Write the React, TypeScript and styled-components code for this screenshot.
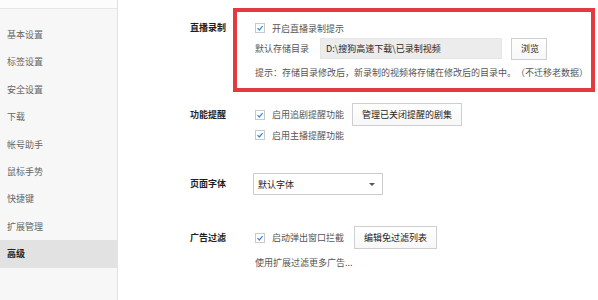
import React from "react";
import styled, { createGlobalStyle } from "styled-components";

const GlobalStyle = createGlobalStyle`
  html, body {
    margin: 0;
    padding: 0;
    background: #ffffff;
  }
  body {
    font-family: "Noto Sans CJK SC", "Noto Sans", sans-serif;
    font-size: 9px;
    color: #444;
    text-spacing-trim: space-all;
  }
`;

const Page = styled.div`
  display: flex;
  width: 598px;
  height: 300px;
  overflow: hidden;
  background: #ffffff;
`;

const Sidebar = styled.nav`
  display: flex;
  flex-direction: column;
  width: 117px;
  flex-shrink: 0;
  background: #f7f7f7;
  border-right: 1px solid #e2e2e2;
`;

const SidebarTop = styled.div`
  height: 8px;
  background: #fcfcfc;
  border-bottom: 1px solid #e6e6e6;
`;

const NavList = styled.ul`
  list-style: none;
  margin: 0;
  padding: 12px 0 0;
`;

const NavItem = styled.li<{ $active?: boolean }>`
  height: 27.4px;
  line-height: 27.4px;
  padding-left: 7px;
  font-size: 9px;
  color: ${({ $active }) => ($active ? "#222" : "#666")};
  font-weight: ${({ $active }) => ($active ? 600 : 400)};
  background: ${({ $active }) => ($active ? "#e2e2e2" : "transparent")};
`;

const Main = styled.main`
  display: flex;
  flex-direction: column;
  padding: 8px 0 0 72px;
  flex: 1;
`;

const Section = styled.section<{ $gap?: number }>`
  display: grid;
  grid-template-columns: 43px 1fr;
  align-items: start;
  margin-top: ${({ $gap }) => $gap ?? 0}px;
`;

const Label = styled.div<{ $top?: number; $lh: number }>`
  padding-top: ${({ $top }) => $top ?? 0}px;
  line-height: ${({ $lh }) => $lh}px;
  font-size: 9px;
  font-weight: 700;
  color: #1e1e1e;
  white-space: nowrap;
`;

const Content = styled.div`
  display: flex;
  flex-direction: column;
  padding-left: 22px;
`;

const Highlight = styled.div`
  display: flex;
  flex-direction: column;
  width: 362px;
  border: 4px solid #e23a3f;
  padding: 8px 0 8px 18px;
  box-sizing: border-box;
`;

const Row = styled.div<{ $h: number; $mt?: number }>`
  display: flex;
  align-items: center;
  height: ${({ $h }) => $h}px;
  margin-top: ${({ $mt }) => $mt ?? 0}px;
  white-space: nowrap;
`;

const Box = styled.span`
  display: inline-flex;
  width: 10px;
  height: 10px;
  box-sizing: border-box;
  border: 1px solid #c9c9c9;
  background: #fff;
  margin-right: 7px;
  flex-shrink: 0;
`;

const Text = styled.span<{ $color?: string }>`
  font-size: 9px;
  color: ${({ $color }) => $color ?? "#555"};
`;

const PathField = styled.div`
  width: 182px;
  height: 21px;
  box-sizing: border-box;
  margin-left: 11px;
  padding-left: 5px;
  display: flex;
  align-items: center;
  background: #ececec;
  border: 1px solid #e6e6e6;
  color: #2a2a2a;
  font-size: 9px;
`;

const Button = styled.button<{ $ml?: number; $w?: number; $h?: number }>`
  font-family: inherit;
  font-size: 9px;
  color: #222;
  height: ${({ $h }) => $h ?? 23}px;
  width: ${({ $w }) => ($w ? `${$w}px` : "auto")};
  padding: 0 9px;
  margin-left: ${({ $ml }) => $ml ?? 0}px;
  background: linear-gradient(#ffffff, #f7f7f7);
  border: 1px solid #cfcfcf;
  border-radius: 0;
  box-sizing: border-box;
  white-space: nowrap;
`;

const Select = styled.div`
  display: flex;
  align-items: center;
  justify-content: space-between;
  width: 130px;
  height: 22px;
  box-sizing: border-box;
  margin-left: -2px;
  padding: 0 7px 0 4px;
  background: #fff;
  border: 1px solid #cdcdcd;
  color: #222;
  font-size: 9px;
`;

const Arrow = styled.span`
  width: 0;
  height: 0;
  border-left: 3px solid transparent;
  border-right: 3px solid transparent;
  border-top: 3px solid #555;
`;

const Check: React.FC = () => (
  <Box>
    <svg width="8" height="8" viewBox="0 0 8 8">
      <polyline
        points="1.5,4.2 3.3,6 6.6,2.2"
        fill="none"
        stroke="#3a8ad8"
        strokeWidth="1.2"
      />
    </svg>
  </Box>
);

const navItems = [
  "基本设置",
  "标签设置",
  "安全设置",
  "下载",
  "帐号助手",
  "鼠标手势",
  "快捷键",
  "扩展管理",
  "高级",
];

export default function App() {
  return (
    <Page>
      <GlobalStyle />
      <Sidebar>
        <SidebarTop />
        <NavList>
          {navItems.map((item) => (
            <NavItem key={item} $active={item === "高级"}>
              {item}
            </NavItem>
          ))}
        </NavList>
      </Sidebar>
      <Main>
        <Section>
          <Label $top={12} $lh={16}>直播录制</Label>
          <Highlight>
            <Row $h={16}>
              <Check />
              <Text>开启直播录制提示</Text>
            </Row>
            <Row $h={21} $mt={2}>
              <Text>默认存储目录</Text>
              <PathField>D:\搜狗高速下载\已录制视频</PathField>
              <Button $ml={9} $w={36} $h={22}>
                浏览
              </Button>
            </Row>
            <Row $h={16} $mt={5}>
              <Text>
                提示：存储目录修改后，新录制的视频将存储在修改后的目录中。（不迁移老数据）
              </Text>
            </Row>
          </Highlight>
        </Section>

        <Section $gap={11}>
          <Label $lh={23}>功能提醒</Label>
          <Content>
            <Row $h={23}>
              <Check />
              <Text>启用追剧提醒功能</Text>
              <Button $ml={8}>管理已关闭提醒的剧集</Button>
            </Row>
            <Row $h={18}>
              <Check />
              <Text>启用主播提醒功能</Text>
            </Row>
          </Content>
        </Section>

        <Section $gap={29}>
          <Label $lh={22}>页面字体</Label>
          <Content>
            <Select>
              <span>默认字体</span>
              <Arrow />
            </Select>
          </Content>
        </Section>

        <Section $gap={31}>
          <Label $lh={23}>广告过滤</Label>
          <Content>
            <Row $h={23}>
              <Check />
              <Text>启动弹出窗口拦截</Text>
              <Button $ml={10}>编辑免过滤列表</Button>
            </Row>
            <Row $h={16} $mt={5}>
              <Text>使用扩展过滤更多广告...</Text>
            </Row>
          </Content>
        </Section>
      </Main>
    </Page>
  );
}
